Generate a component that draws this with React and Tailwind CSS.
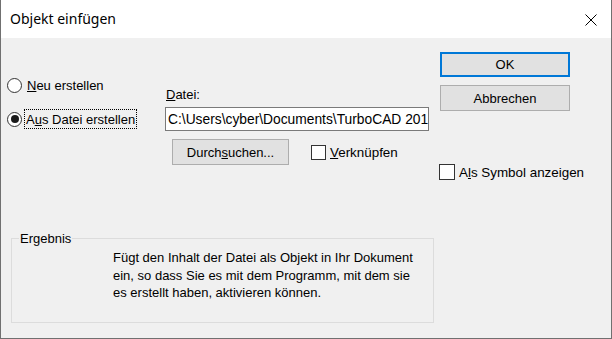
import React from "react";

const Radio = ({ checked }) => (
  <span className="w-[15px] h-[15px] rounded-full border border-[#333333] bg-white flex items-center justify-center shrink-0">
    {checked && <span className="w-[8px] h-[8px] rounded-full bg-[#1a1a1a]" />}
  </span>
);

const Checkbox = ({ size = "w-[15px] h-[15px]" }) => (
  <span className={`block ${size} border border-[#333333] bg-white shrink-0`} />
);

export default function App() {
  return (
    <div className="w-[612px] h-[339px] flex flex-col border-x border-b border-[#707070] bg-white font-['Liberation_Sans',Arial,sans-serif] text-[13px] leading-[15px] text-black">
      {/* title bar */}
      <div className="h-[38px] flex items-center justify-between bg-white pl-[9px] pr-[14px]">
        <span className="font-['Noto_Sans',sans-serif] text-[14px] leading-[20px]">Objekt einfügen</span>
        <svg width="12" height="12" viewBox="0 0 12 12" className="mt-[1px]">
          <path d="M0.5 0.5 L11.5 11.5 M11.5 0.5 L0.5 11.5" stroke="#000" strokeWidth="1" fill="none" />
        </svg>
      </div>

      <div className="flex-1 bg-[#f0f0f0] flex flex-col">
        <div className="h-[190px] flex">
          {/* radios */}
          <div className="w-[164px] pl-[6px] pt-[37px] flex flex-col gap-[14px]">
            <div className="h-[20px] flex items-center">
              <Radio />
              <span className="ml-[5px]">
                <u>N</u>eu erstellen
              </span>
            </div>
            <div className="h-[20px] flex items-center">
              <Radio checked />
              <span className="ml-[2px] h-[20px] flex items-center px-[1px] border border-dotted border-black">
                A<u>u</u>s Datei erstellen
              </span>
            </div>
          </div>

          {/* file */}
          <div className="w-[275px] pt-[49px] flex flex-col">
            <span className="pl-[1px]">
              <u>D</u>atei:
            </span>
            <div className="mt-[5px] w-[264px] h-[24px] border border-[#7a7a7a] bg-white pl-[2px] flex items-center overflow-hidden whitespace-nowrap text-[13.8px]">
              {"C:\\Users\\cyber\\Documents\\TurboCAD 2018"}
            </div>
            <div className="mt-[8px] pl-[7px] flex items-center">
              <button className="w-[117px] h-[26px] bg-[#e1e1e1] border border-[#adadad] flex items-center justify-center">
                <span>
                  Durch<u>s</u>uchen...
                </span>
              </button>
              <span className="ml-[22px]">
                <Checkbox />
              </span>
              <span className="ml-[4px] text-[13.4px]">
                <u>V</u>erknüpfen
              </span>
            </div>
          </div>

          {/* buttons */}
          <div className="pt-[14px] flex flex-col">
            <button className="w-[130px] h-[25px] bg-[#e1e1e1] border-2 border-[#0078d7] flex items-center justify-center">
              OK
            </button>
            <button className="mt-[8px] w-[130px] h-[26px] bg-[#e1e1e1] border border-[#adadad] flex items-center justify-center">
              Abbrechen
            </button>
            <div className="mt-[53px] -ml-px flex items-center">
              <Checkbox size="w-[16px] h-[16px]" />
              <span className="ml-[4px] text-[13.4px]">
                A<u>l</u>s Symbol anzeigen
              </span>
            </div>
          </div>
        </div>

        {/* result group */}
        <div className="relative mt-[10px] ml-[10px] w-[423px] h-[85px] border border-[#dcdcdc]">
          <span className="absolute left-[7px] top-[-8px] px-[1px] bg-[#f0f0f0]">Ergebnis</span>
          <p className="pl-[101px] pt-[10px] leading-[17.5px]">
            Fügt den Inhalt der Datei als Objekt in Ihr Dokument
            <br />
            ein, so dass Sie es mit dem Programm, mit dem sie
            <br />
            es erstellt haben, aktivieren können.
          </p>
        </div>
      </div>
    </div>
  );
}
